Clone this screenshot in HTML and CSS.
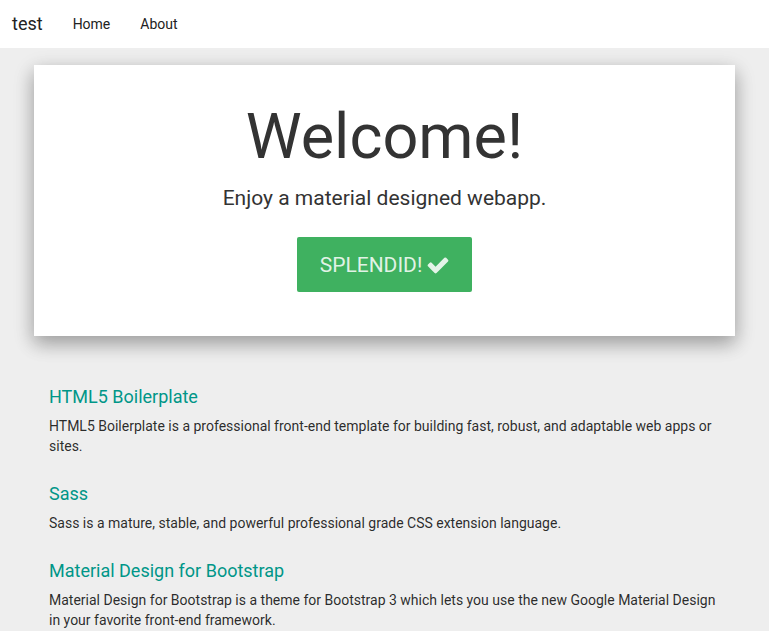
FILE: index.html
```html
<!DOCTYPE html>
<html>
<head>
<meta charset="utf-8">
<link rel="stylesheet" href="styles.css">
</head>
<body>
<nav class="navbar">
  <a class="brand">test</a>
  <a class="nav-link">Home</a>
  <a class="nav-link">About</a>
</nav>
<main class="container">
  <section class="jumbotron">
    <h1 class="title">Welcome!</h1>
    <p class="lead">Enjoy a material designed webapp.</p>
    <button class="btn">SPLENDID! <svg class="check" viewBox="0 0 1792 1792"><path fill="currentColor" d="M1671 566q0 40-28 68l-724 724-136 136q-28 28-68 28t-68-28l-136-136-362-362q-28-28-28-68t28-68l136-136q28-28 68-28t68 28l294 295 656-657q28-28 68-28t68 28l136 136q28 28 28 68z"/></svg></button>
  </section>
  <section class="item">
    <h3 class="item-title">HTML5 Boilerplate</h3>
    <p class="item-text">HTML5 Boilerplate is a professional front-end template for building fast, robust, and adaptable web apps or sites.</p>
  </section>
  <section class="item">
    <h3 class="item-title">Sass</h3>
    <p class="item-text">Sass is a mature, stable, and powerful professional grade CSS extension language.</p>
  </section>
  <section class="item">
    <h3 class="item-title">Material Design for Bootstrap</h3>
    <p class="item-text">Material Design for Bootstrap is a theme for Bootstrap 3 which lets you use the new Google Material Design in your favorite front-end framework.</p>
  </section>
</main>
</body>
</html>
```
FILE: styles.css
```css
html, body {
  margin: 0;
  padding: 0;
}
body {
  background: #eeeeee;
  font-family: Roboto, "Liberation Sans", sans-serif;
  color: rgba(0,0,0,0.84);
  font-size: 14px;
  line-height: 20px;
  overflow: hidden;
}
.navbar {
  background: #ffffff;
  height: 47px;
  padding-bottom: 1px;
  display: flex;
  align-items: center;
  padding-left: 12px;
}
.brand {
  font-size: 18px;
  color: #222;
  margin-right: 30px;
}
.nav-link {
  font-size: 14px;
  color: #222;
  margin-right: 30px;
}
.container {
  margin: 17px 34px 0 34px;
  display: flex;
  flex-direction: column;
}
.jumbotron {
  background: #fff;
  height: 271px;
  box-sizing: border-box;
  box-shadow: 0 8px 17px 0 rgba(0,0,0,0.2), 0 6px 20px 0 rgba(0,0,0,0.19);
  display: flex;
  flex-direction: column;
  align-items: center;
  padding-top: 37px;
  margin-bottom: 33px;
}
.title {
  margin: 0;
  font-size: 63px;
  font-weight: 400;
  line-height: 69px;
  color: #333;
}
.lead {
  margin: 12px 0 0 0;
  font-size: 21px;
  line-height: 30px;
  color: #333;
}
.btn {
  margin-top: 24px;
  width: 175px;
  height: 55px;
  border: none;
  border-radius: 2px;
  background: #3fb160;
  color: rgba(255,255,255,0.86);
  font-family: Roboto, "Liberation Sans", sans-serif;
  font-size: 21px;
  display: flex;
  align-items: center;
  justify-content: center;
  gap: 4px;
  padding: 0 0 0 1px;
}
.check {
  width: 24px;
  height: 24px;
}
.item {
  padding: 0 15px;
}
.item-title {
  margin: 18px 0 9px 0;
  font-size: 18px;
  font-weight: 400;
  line-height: 20px;
  color: #009688;
}
.item-text {
  margin: 0 0 10px 0;
  max-width: 671px;
}
```
